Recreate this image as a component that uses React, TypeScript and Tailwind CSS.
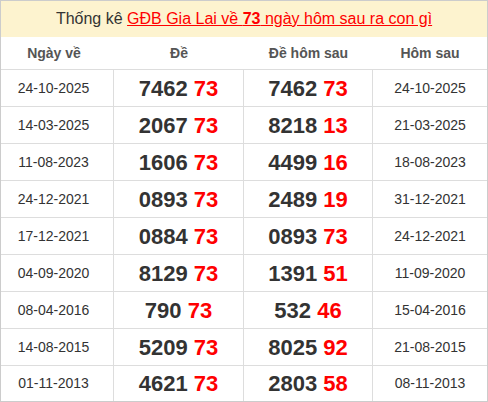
const rows: [string, string, string, string, string, string][] = [
  ["24-10-2025", "7462", "73", "7462", "73", "24-10-2025"],
  ["14-03-2025", "2067", "73", "8218", "13", "21-03-2025"],
  ["11-08-2023", "1606", "73", "4499", "16", "18-08-2023"],
  ["24-12-2021", "0893", "73", "2489", "19", "31-12-2021"],
  ["17-12-2021", "0884", "73", "0893", "73", "24-12-2021"],
  ["04-09-2020", "8129", "73", "1391", "51", "11-09-2020"],
  ["08-04-2016", "790", "73", "532", "46", "15-04-2016"],
  ["14-08-2015", "5209", "73", "8025", "92", "21-08-2015"],
  ["01-11-2013", "4621", "73", "2803", "58", "08-11-2013"],
];

const cols = "grid grid-cols-[113px_130px_129px_1fr]";

const Num = ({ head, tail }: { head: string; tail: string }) => (
  <span className="text-[22px] font-bold">
    <span className="text-[#333]">{head}</span>{" "}
    <span className="text-[#ff0000]">{tail}</span>
  </span>
);

export default function App() {
  return (
    <div className="w-[488px] h-[402px] overflow-hidden bg-white font-['Liberation_Sans',Arial,sans-serif]">
      <div className="border border-[#cccccc]">
        {/* Title */}
        <div className="h-[36px] bg-[#fdf3cf] flex items-center justify-center text-[16px] text-[#333]">
          <span>
            Thống kê{" "}
            <a href="#" className="text-[#ff0000] underline">
              GĐB Gia Lai về <b>73</b> ngày hôm sau ra con gì
            </a>
          </span>
        </div>

        {/* Column headers */}
        <div className={`${cols} h-[32px] text-[14px] font-bold text-[#555]`}>
          <div className="flex items-center justify-center pr-[7px]">Ngày về</div>
          <div className="flex items-center justify-center">Đề</div>
          <div className="flex items-center justify-center">Đề hôm sau</div>
          <div className="flex items-center justify-center">Hôm sau</div>
        </div>

        {/* Rows */}
        {rows.map((r, i) => (
          <div
            key={i}
            className={`${cols} ${i === rows.length - 1 ? "h-[36px]" : "h-[37px]"} border-t border-[#dddddd] text-[14px] text-[#333]`}
          >
            <div className="flex items-center justify-center pr-[7px] border-r border-[#dddddd]">{r[0]}</div>
            <div className="flex items-center justify-center border-r border-[#dddddd]">
              <Num head={r[1]} tail={r[2]} />
            </div>
            <div className="flex items-center justify-center border-r border-[#dddddd]">
              <Num head={r[3]} tail={r[4]} />
            </div>
            <div className="flex items-center justify-center">{r[5]}</div>
          </div>
        ))}
      </div>
    </div>
  );
}
